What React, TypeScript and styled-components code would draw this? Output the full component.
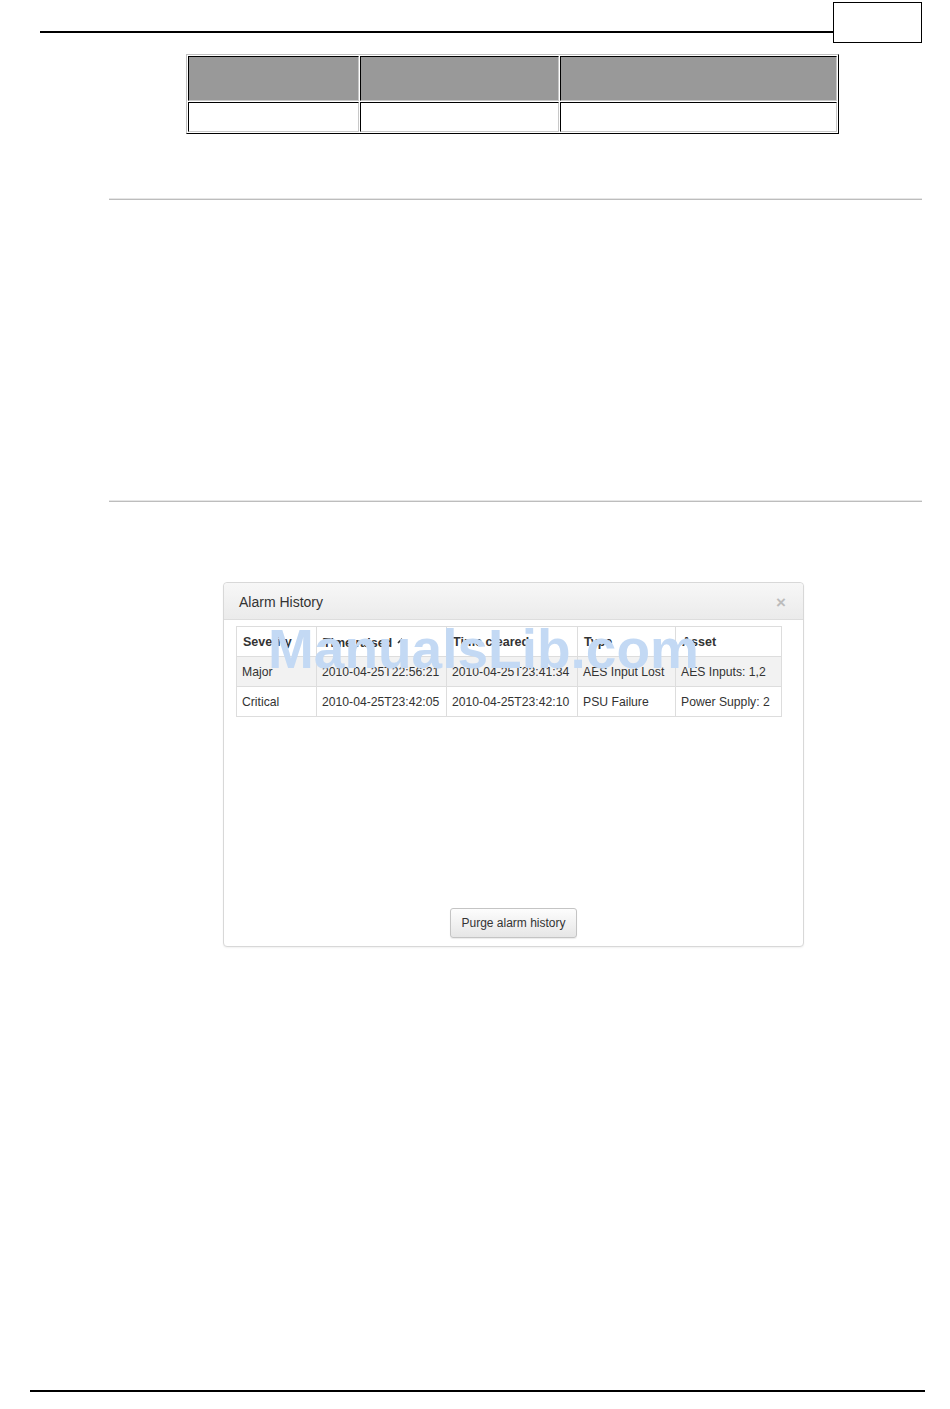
import styled, { createGlobalStyle } from "styled-components";

const GlobalStyle = createGlobalStyle`
  html, body {
    margin: 0;
    padding: 0;
    background: #fff;
  }
  body {
    font-family: "Liberation Sans", Arial, sans-serif;
    color: #333;
  }
`;

type Alarm = {
  severity: string;
  raised: string;
  cleared: string;
  type: string;
  asset: string;
};

const alarms: Alarm[] = [
  {
    severity: "Major",
    raised: "2010-04-25T22:56:21",
    cleared: "2010-04-25T23:41:34",
    type: "AES Input Lost",
    asset: "AES Inputs: 1,2",
  },
  {
    severity: "Critical",
    raised: "2010-04-25T23:42:05",
    cleared: "2010-04-25T23:42:10",
    type: "PSU Failure",
    asset: "Power Supply: 2",
  },
];

const columns = [
  { label: "Severity", width: 80 },
  { label: "Time raised", width: 130, sorted: true },
  { label: "Time cleared", width: 131 },
  { label: "Type", width: 98 },
  { label: "Asset", width: 106 },
];

// spec table column shares, in percent
const specCols = ["26.4%", "30.8%", "42.8%"];

function SortIcon() {
  return (
    <svg width="9" height="9" viewBox="0 0 9 9" aria-hidden>
      <path d="M1 6 L4.5 2.5 L8 6" fill="none" stroke="#333" strokeWidth="1.6" />
    </svg>
  );
}

export default function App() {
  return (
    <Page>
      <GlobalStyle />
      <TopBar>
        <TopRule />
        <PageBox />
      </TopBar>

      <SpecTable>
        <colgroup>
          {specCols.map((w) => (
            <col key={w} style={{ width: w }} />
          ))}
        </colgroup>
        <tbody>
          <tr>
            {specCols.map((w) => (
              <SpecCell key={w} $head />
            ))}
          </tr>
          <tr>
            {specCols.map((w) => (
              <SpecCell key={w} />
            ))}
          </tr>
        </tbody>
      </SpecTable>

      <Divider $top={64} />
      <Divider $top={300} />

      <Modal>
        <ModalHeader>
          <ModalTitle>Alarm History</ModalTitle>
          <Close>×</Close>
        </ModalHeader>
        <ModalBody>
          <AlarmTable>
            <colgroup>
              {columns.map((c) => (
                <col key={c.label} style={{ width: c.width }} />
              ))}
            </colgroup>
            <thead>
              <tr>
                {columns.map((c) => (
                  <Th key={c.label}>
                    {c.label}
                    {c.sorted && (
                      <SortWrap>
                        <SortIcon />
                      </SortWrap>
                    )}
                  </Th>
                ))}
              </tr>
            </thead>
            <tbody>
              {alarms.map((a, i) => (
                <Tr key={a.raised} $striped={i % 2 === 0}>
                  <Td>{a.severity}</Td>
                  <Td>{a.raised}</Td>
                  <Td>{a.cleared}</Td>
                  <Td>{a.type}</Td>
                  <Td>{a.asset}</Td>
                </Tr>
              ))}
            </tbody>
          </AlarmTable>
          <Footer>
            <PurgeButton type="button">Purge alarm history</PurgeButton>
          </Footer>
        </ModalBody>
        <Watermark>ManualsLib.com</Watermark>
      </Modal>

      <BottomRule />
    </Page>
  );
}

const Page = styled.div`
  width: 950px;
  height: 1409px;
  display: flex;
  flex-direction: column;
  overflow: hidden;
`;

const TopBar = styled.div`
  display: flex;
  align-items: flex-start;
  padding: 2px 0 0 40px;
  width: 882px;
`;

const TopRule = styled.div`
  flex: 1;
  height: 0;
  margin-top: 29px;
  border-top: 2px solid #000;
`;

const PageBox = styled.div`
  width: 87px;
  height: 39px;
  border: 1px solid #000;
`;

const SpecTable = styled.table`
  margin: 11px 0 0 186px;
  width: 653px;
  box-sizing: border-box;
  border-collapse: separate;
  border-spacing: 1px;
  table-layout: fixed;
  border: 1px solid;
  border-color: #c0c0c0 #000 #000 #c0c0c0;
`;

const SpecCell = styled.td<{ $head?: boolean }>`
  height: ${(p) => (p.$head ? 43 : 28)}px;
  padding: 0;
  background: ${(p) => (p.$head ? "#999" : "#fff")};
  border: 1px solid;
  border-color: #000 #c8c8c8 #c8c8c8 #000;
`;

const Divider = styled.div<{ $top: number }>`
  margin: ${(p) => p.$top}px 28px 0 109px;
  height: 0;
  border-top: 1px solid #e6e6e6;
  border-bottom: 1px solid #bdbdbd;
`;

const Modal = styled.div`
  position: relative;
  margin: 80px 0 0 223px;
  width: 579px;
  border: 1px solid #d8d8d8;
  border-radius: 4px;
  box-shadow: 0 1px 2px rgba(0, 0, 0, 0.06);
  background: #fff;
`;

const ModalHeader = styled.div`
  display: flex;
  align-items: center;
  justify-content: space-between;
  box-sizing: border-box;
  height: 37px;
  padding: 1px 17px 0 15px;
  background: linear-gradient(#f7f7f7, #ebebeb);
  border-bottom: 1px solid #ddd;
  border-radius: 4px 4px 0 0;
`;

const ModalTitle = styled.span`
  font-size: 14px;
  color: #333;
`;

const Close = styled.span`
  font-size: 17px;
  font-weight: bold;
  color: #bcbcbc;
  line-height: 1;
  margin-top: 2px;
`;

const ModalBody = styled.div`
  height: 312px;
  padding: 6px 22px 8px 12px;
  display: flex;
  flex-direction: column;
  align-items: flex-start;
`;

const AlarmTable = styled.table`
  width: 545px;
  table-layout: fixed;
  border-collapse: collapse;
  font-size: 12.2px;
  color: #333;
  border: 1px solid #ddd;
`;

const Th = styled.th`
  height: 28px;
  padding: 1px 6px 0;
  text-align: left;
  font-size: 12.5px;
  font-weight: bold;
  color: #333;
  border: 1px solid #ddd;
  white-space: nowrap;
  overflow: hidden;
  background: #fff;
`;

const SortWrap = styled.span`
  display: inline-block;
  margin-left: 5px;
  vertical-align: 1px;
`;

const Tr = styled.tr<{ $striped: boolean }>`
  background: ${(p) => (p.$striped ? "#f2f2f2" : "#fff")};
`;

const Td = styled.td`
  height: 28px;
  padding: 1px 5px 0;
  border: 1px solid #ddd;
  white-space: nowrap;
  overflow: hidden;
`;

const Footer = styled.div`
  margin-top: auto;
  align-self: stretch;
  display: flex;
  justify-content: center;
  padding-left: 10px;
`;

const PurgeButton = styled.button`
  height: 30px;
  padding: 0 10px;
  font-family: "Liberation Sans", Arial, sans-serif;
  font-size: 12px;
  color: #333;
  background: linear-gradient(#fdfdfd, #e6e6e6);
  border: 1px solid #c4c4c4;
  border-radius: 3px;
  box-shadow: 0 1px 1px rgba(0, 0, 0, 0.08);
`;

const Watermark = styled.div`
  position: absolute;
  left: 44px;
  top: 39px;
  font-family: "Liberation Sans", Arial, sans-serif;
  font-size: 55px;
  font-weight: bold;
  line-height: 1;
  color: #c3d9f4;
  pointer-events: none;
  white-space: nowrap;
`;

const BottomRule = styled.div`
  margin: auto 25px 17px 30px;
  height: 0;
  border-top: 2px solid #000;
`;
